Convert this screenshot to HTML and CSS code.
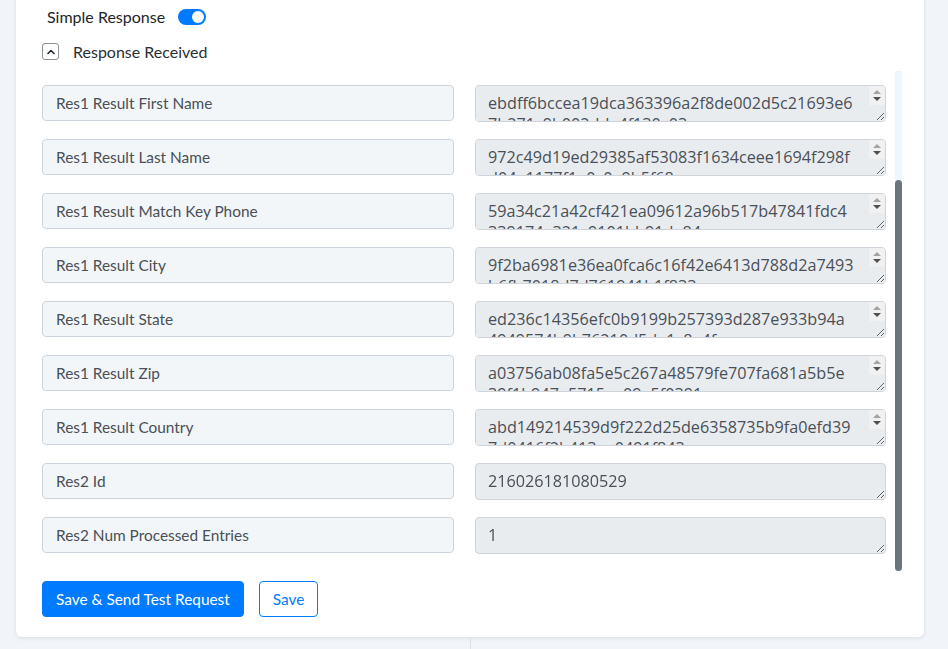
FILE: index.html
```html
<!DOCTYPE html>
<html lang="en">
<head>
    <meta charset="UTF-8">
    <meta name="viewport" content="width=device-width, initial-scale=1.0">
    <title>Response Mapping</title>
    <link rel="stylesheet" href="styles.css">
</head>
<body>

    <div class="panel">
        <!-- Toggle for the simple response mode -->
        <div class="simple-response">
            <span class="simple-response-label">Simple Response</span>
            <span class="switch"><span class="switch-knob"></span></span>
        </div>

        <div class="section-head">
            <span class="collapse-btn">
                <svg width="10" height="10" viewBox="0 0 10 10">
                    <path d="M2 6.5 L5 3.5 L8 6.5" fill="none" stroke="#212529" stroke-width="1.6" stroke-linecap="round" stroke-linejoin="round"/>
                </svg>
            </span>
            <span class="section-title">Response Received</span>
        </div>

        <!-- Received keys on the left, received values on the right -->
        <div class="fields-frame">
            <div class="fields-list" id="fieldsList">
                <div class="field-row">
                    <input class="field-key" type="text" value="Res1 Result Id" readonly>
                    <div class="value-box has-scroll">
                        <textarea class="field-value" rows="1" disabled>6f4c2a91be03d7e5a81c4f2d90b36e7a15c8d2f04b9e6a3c71d58f2e0a4b69c3</textarea>
                        <span class="value-scroll"><span class="arrow-up"></span><span class="arrow-down"></span></span>
                    </div>
                </div>
                <div class="field-row">
                    <input class="field-key" type="text" value="Res1 Result Email" readonly>
                    <div class="value-box has-scroll">
                        <textarea class="field-value" rows="1" disabled>1c7e93a04fd2b85e6a0c31f9d7b42e58a6f3c09d21e7b4a85f60c3d9e2b17a48</textarea>
                        <span class="value-scroll"><span class="arrow-up"></span><span class="arrow-down"></span></span>
                    </div>
                </div>
                <div class="field-row">
                    <input class="field-key" type="text" value="Res1 Result First Name" readonly>
                    <div class="value-box has-scroll">
                        <textarea class="field-value" rows="1" disabled>ebdff6bccea19dca363396a2f8de002d5c21693e67b271c9b002dda4f130c03</textarea>
                        <span class="value-scroll"><span class="arrow-up"></span><span class="arrow-down"></span></span>
                    </div>
                </div>
                <div class="field-row">
                    <input class="field-key" type="text" value="Res1 Result Last Name" readonly>
                    <div class="value-box has-scroll">
                        <textarea class="field-value" rows="1" disabled>972c49d19ed29385af53083f1634ceee1694f298fd04a1177f1e0c0a9b5f68</textarea>
                        <span class="value-scroll"><span class="arrow-up"></span><span class="arrow-down"></span></span>
                    </div>
                </div>
                <div class="field-row">
                    <input class="field-key" type="text" value="Res1 Result Match Key Phone" readonly>
                    <div class="value-box has-scroll">
                        <textarea class="field-value" rows="1" disabled>59a34c21a42cf421ea09612a96b517b47841fdc4339174a321c9101bb91de84</textarea>
                        <span class="value-scroll"><span class="arrow-up"></span><span class="arrow-down"></span></span>
                    </div>
                </div>
                <div class="field-row">
                    <input class="field-key" type="text" value="Res1 Result City" readonly>
                    <div class="value-box has-scroll">
                        <textarea class="field-value" rows="1" disabled>9f2ba6981e36ea0fca6c16f42e6413d788d2a7493b6fb7018d7d761941b1f833</textarea>
                        <span class="value-scroll"><span class="arrow-up"></span><span class="arrow-down"></span></span>
                    </div>
                </div>
                <div class="field-row">
                    <input class="field-key" type="text" value="Res1 Result State" readonly>
                    <div class="value-box has-scroll">
                        <textarea class="field-value" rows="1" disabled>ed236c14356efc0b9199b257393d287e933b94a4949574b9b76210d5da1c8e4f</textarea>
                        <span class="value-scroll"><span class="arrow-up"></span><span class="arrow-down"></span></span>
                    </div>
                </div>
                <div class="field-row">
                    <input class="field-key" type="text" value="Res1 Result Zip" readonly>
                    <div class="value-box has-scroll">
                        <textarea class="field-value" rows="1" disabled>a03756ab08fa5e5c267a48579fe707fa681a5b5e39f1b947e5715ea09a5f0391</textarea>
                        <span class="value-scroll"><span class="arrow-up"></span><span class="arrow-down"></span></span>
                    </div>
                </div>
                <div class="field-row">
                    <input class="field-key" type="text" value="Res1 Result Country" readonly>
                    <div class="value-box has-scroll">
                        <textarea class="field-value" rows="1" disabled>abd149214539d9f222d25de6358735b9fa0efd397d0416f2b413ea0491f843e</textarea>
                        <span class="value-scroll"><span class="arrow-up"></span><span class="arrow-down"></span></span>
                    </div>
                </div>
                <div class="field-row">
                    <input class="field-key" type="text" value="Res2 Id" readonly>
                    <div class="value-box">
                        <textarea class="field-value" rows="1" disabled>216026181080529</textarea>
                    </div>
                </div>
                <div class="field-row">
                    <input class="field-key" type="text" value="Res2 Num Processed Entries" readonly>
                    <div class="value-box">
                        <textarea class="field-value" rows="1" disabled>1</textarea>
                    </div>
                </div>
            </div>
            <div class="list-scrollbar" id="listScrollbar">
                <div class="list-scrollbar-thumb" id="listThumb"></div>
            </div>
        </div>

        <div class="actions">
            <button class="btn btn-primary" type="button">Save &amp; Send Test Request</button>
            <button class="btn btn-outline" type="button">Save</button>
        </div>
    </div>

    <div class="split-below"></div>

    <script>
        const fieldsList = document.getElementById('fieldsList');
        const listThumb = document.getElementById('listThumb');
        fieldsList.scrollTop = fieldsList.scrollHeight;
        const ratio = fieldsList.clientHeight / fieldsList.scrollHeight;
        listThumb.style.height = Math.round(fieldsList.clientHeight * ratio) + 'px';
    </script>

</body>
</html>
```

FILE: styles.css
```css
html, body {
    margin: 0;
    padding: 0;
    background-color: #F1F4F8;
    font-family: Lato, "Open Sans", sans-serif;
    color: #212529;
    height: 100%;
    overflow: hidden;
}

.panel {
    margin: -20px 24px 0 16px;
    padding: 26px 22px 20px 26px;
    background-color: #FFFFFF;
    border-radius: 0 0 6px 6px;
    box-shadow: 0 1px 4px rgba(40, 50, 70, 0.12);
}

.simple-response {
    display: flex;
    align-items: center;
    padding-left: 5px;
    height: 21px;
}

.simple-response-label {
    font-size: 16px;
    margin-right: 13px;
}

.switch {
    display: inline-flex;
    align-items: center;
    justify-content: flex-end;
    width: 28px;
    height: 16px;
    padding: 0 2px;
    box-sizing: border-box;
    border-radius: 8px;
    background-color: #007BFF;
}

.switch-knob {
    width: 12px;
    height: 12px;
    border-radius: 50%;
    background-color: #FFFFFF;
}

.section-head {
    display: flex;
    align-items: center;
    margin-top: 16px;
    height: 17px;
}

.collapse-btn {
    display: inline-flex;
    align-items: center;
    justify-content: center;
    width: 15px;
    height: 15px;
    border: 1px solid #8A9199;
    border-radius: 3px;
}

.section-title {
    font-size: 16px;
    margin-left: 14px;
    color: #2B2F33;
}

.fields-frame {
    display: flex;
    margin-top: 11px;
    height: 500px;
}

.fields-list {
    flex: 1;
    overflow: hidden;
    padding: 45px 9px 17px 0;
    box-sizing: border-box;
}

.list-scrollbar {
    width: 7px;
    display: flex;
    flex-direction: column;
    justify-content: flex-end;
    background-color: #EEF5FD;
}

.list-scrollbar-thumb {
    height: 390px;
    background-color: #6C757D;
    border-radius: 4px;
}

.field-row {
    display: grid;
    grid-template-columns: 412px 1fr;
    column-gap: 21px;
    margin-bottom: 17px;
}

.field-row:last-child {
    margin-bottom: 0;
}

.field-key {
    height: 36px;
    box-sizing: border-box;
    padding: 0 13px;
    border: 1px solid #CCD3DB;
    border-radius: 4px;
    background-color: #F3F6F9;
    color: #495057;
    font-family: Lato, "Open Sans", sans-serif;
    font-size: 15.4px;
    outline: none;
}

.value-box {
    position: relative;
    display: flex;
}

.field-value {
    flex: 1;
    height: 37px;
    box-sizing: border-box;
    padding: 7px 12px 6px;
    border: 1px solid #CED4DA;
    border-radius: 4px;
    background-color: #E9ECEF;
    color: #495057;
    font-family: "Open Sans", sans-serif;
    font-size: 16.2px;
    line-height: 21px;
    resize: vertical;
}

.has-scroll .field-value {
    padding-right: 31.5px;
}

/* arrow buttons of the value's own scrollbar */
.value-scroll {
    position: absolute;
    top: 1px;
    right: 1px;
    width: 16px;
    height: 19px;
    display: flex;
    flex-direction: column;
    align-items: center;
    justify-content: center;
    gap: 3px;
    background-color: #F1F1F1;
    border-top-right-radius: 3px;
}

.arrow-up {
    width: 0;
    height: 0;
    border-left: 4px solid transparent;
    border-right: 4px solid transparent;
    border-bottom: 4px solid #A3A3A3;
}

.arrow-down {
    width: 0;
    height: 0;
    border-left: 4px solid transparent;
    border-right: 4px solid transparent;
    border-top: 4px solid #505050;
}

.actions {
    display: flex;
    gap: 15px;
    margin-top: 10px;
}

.btn {
    height: 36px;
    padding: 0 13px;
    border-radius: 4px;
    font-family: Lato, "Open Sans", sans-serif;
    font-size: 15.4px;
    cursor: pointer;
}

.btn-primary {
    padding: 0 13px;
    border: 1px solid #007BFF;
    background-color: #007BFF;
    color: #FFFFFF;
}

.btn-outline {
    border: 1px solid #007BFF;
    background-color: #FFFFFF;
    color: #007BFF;
}

.split-below {
    margin-left: 470px;
    height: 40px;
    border-left: 1px solid #DDE1E6;
}
```
